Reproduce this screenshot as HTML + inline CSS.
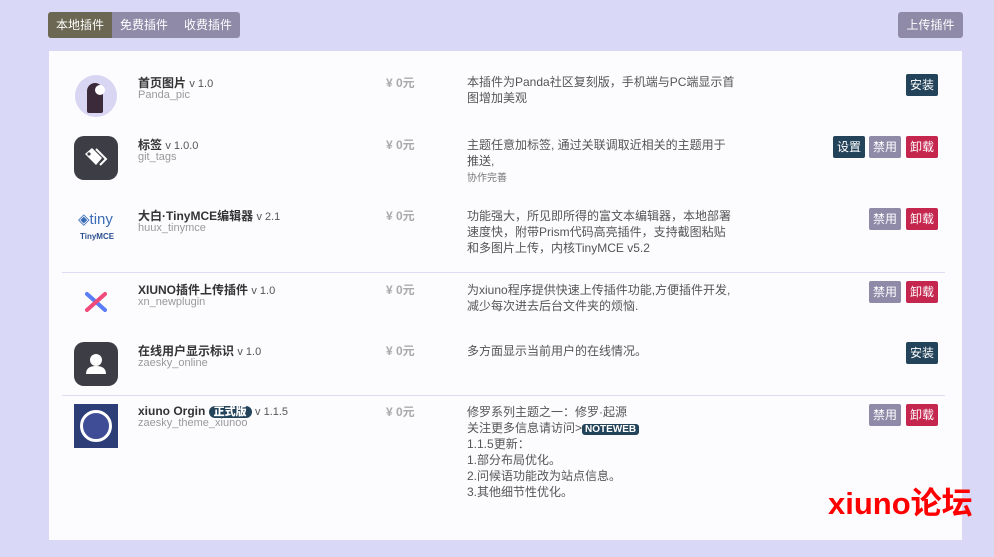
<!DOCTYPE html><html><head><meta charset="utf-8"><style>
body{margin:0;width:994px;height:557px;background:#d9d8f6;font-family:"Liberation Sans","Noto Sans CJK SC",sans-serif;font-size:12px;position:relative;overflow:hidden;color:#444}
.a{position:absolute}
.tabs{left:48px;top:12px;height:26px;display:flex;border-radius:3px;overflow:hidden}
.tabs div{padding:0 8px;line-height:26px;color:#fff;background:#8e8aa8;font-size:12px}
.tabs div.on{background:#6b6752}
.up{left:898px;top:12px;width:65px;height:26px;line-height:26px;text-align:center;color:#fff;background:#8e8aa8;border-radius:3px}
.card{left:49px;top:51px;width:913px;height:489px;background:#fcfcff}
.nm{font-weight:bold;color:#333;font-size:12px;line-height:14px}
.nm span{font-weight:normal;color:#555;font-size:11px}
.cd{color:#999;font-size:11px;line-height:13px}
.pr{color:#aaa;font-size:12px;font-weight:bold;line-height:14px}
.ds{color:#555;font-size:12px;line-height:16px;width:268px}
.b{position:absolute;height:22px;line-height:22px;width:32px;text-align:center;color:#fff;border-radius:2px;font-size:12px}
.in{background:#23435a}.dis{background:#8e8aa8}.un{background:#c4264e}
.hr{height:1px;background:#dcdcf4}
</style></head><body>
<div class="a tabs"><div class="on">本地插件</div><div>免费插件</div><div>收费插件</div></div>
<div class="a up">上传插件</div>
<div class="a card"></div>
<div class="a hr" style="left:62px;top:272px;width:883px"></div>
<div class="a hr" style="left:62px;top:395px;width:883px"></div>

<div class="a" style="left:75px;top:75px;width:42px;height:42px;border-radius:50%;background:#d8d6f2;overflow:hidden"><div style="position:absolute;left:12px;top:8px;width:16px;height:30px;background:#3a2a3a;border-radius:8px 8px 2px 2px"></div><div style="position:absolute;left:20px;top:10px;width:10px;height:10px;background:#fff;border-radius:50%"></div></div>
<div class="a nm" style="left:138px;top:76px">首页图片 <span>v 1.0</span></div>
<div class="a cd" style="left:138px;top:89px">Panda_pic</div>
<div class="a pr" style="left:386px;top:76px">¥ 0元</div>
<div class="a ds" style="left:467px;top:74px">本插件为Panda社区复刻版，手机端与PC端显示首图增加美观</div>
<div class="b in" style="left:906px;top:74px">安装</div>

<div class="a" style="left:74px;top:136px;width:44px;height:44px;border-radius:10px;background:#3d3d45"><svg width="44" height="44" viewBox="0 0 44 44"><path d="M11 18l7-6 10 10-6 7z" fill="#fff"/><circle cx="15" cy="18" r="1.6" fill="#3d3d45"/><path d="M22 13l10 10-6 6" stroke="#fff" stroke-width="2" fill="none"/></svg></div>
<div class="a nm" style="left:138px;top:138px">标签 <span>v 1.0.0</span></div>
<div class="a cd" style="left:138px;top:151px">git_tags</div>
<div class="a pr" style="left:386px;top:138px">¥ 0元</div>
<div class="a ds" style="left:467px;top:137px">主题任意加标签, 通过关联调取近相关的主题用于推送,<br><span style="font-size:10px;color:#777">协作完善</span></div>
<div class="b in" style="left:833px;top:136px">设置</div><div class="b dis" style="left:869px;top:136px">禁用</div><div class="b un" style="left:906px;top:136px">卸载</div>

<div class="a" style="left:78px;top:210px;color:#3b6db5;font-size:15px">◈tiny</div>
<div class="a" style="left:80px;top:232px;color:#2a4f8f;font-size:8px;font-weight:bold">TinyMCE</div>
<div class="a nm" style="left:138px;top:209px">大白·TinyMCE编辑器 <span>v 2.1</span></div>
<div class="a cd" style="left:138px;top:222px">huux_tinymce</div>
<div class="a pr" style="left:386px;top:209px">¥ 0元</div>
<div class="a ds" style="left:467px;top:208px">功能强大，所见即所得的富文本编辑器，本地部署速度快，附带Prism代码高亮插件，支持截图粘贴和多图片上传，内核TinyMCE v5.2</div>
<div class="b dis" style="left:869px;top:208px">禁用</div><div class="b un" style="left:906px;top:208px">卸载</div>

<svg class="a" style="left:84px;top:291px" width="24" height="22"><path d="M3 3l18 16" stroke="#5a7cf5" stroke-width="4" stroke-linecap="round"/><path d="M21 3L3 19" stroke="#ef4a7a" stroke-width="4" stroke-linecap="round"/></svg>
<div class="a nm" style="left:138px;top:283px">XIUNO插件上传插件 <span>v 1.0</span></div>
<div class="a cd" style="left:138px;top:296px">xn_newplugin</div>
<div class="a pr" style="left:386px;top:283px">¥ 0元</div>
<div class="a ds" style="left:467px;top:282px">为xiuno程序提供快速上传插件功能,方便插件开发,减少每次进去后台文件夹的烦恼.</div>
<div class="b dis" style="left:869px;top:281px">禁用</div><div class="b un" style="left:906px;top:281px">卸载</div>

<div class="a" style="left:74px;top:342px;width:44px;height:44px;border-radius:10px;background:#3d3d45"><svg width="44" height="44"><circle cx="22" cy="18" r="6" fill="#fff"/><path d="M12 32q0-8 10-8t10 8z" fill="#fff"/></svg></div>
<div class="a nm" style="left:138px;top:344px">在线用户显示标识 <span>v 1.0</span></div>
<div class="a cd" style="left:138px;top:357px">zaesky_online</div>
<div class="a pr" style="left:386px;top:344px">¥ 0元</div>
<div class="a ds" style="left:467px;top:343px">多方面显示当前用户的在线情况。</div>
<div class="b in" style="left:906px;top:342px">安装</div>

<div class="a" style="left:74px;top:404px;width:44px;height:44px;background:#2c3d78"><div style="position:absolute;left:6px;top:6px;width:26px;height:26px;border:3px solid #fff;border-radius:50%;background:#3e4d95"></div></div>
<div class="a nm" style="left:138px;top:404px">xiuno Orgin <b style="background:#23435a;color:#fff;padding:0 5px;border-radius:8px;font-size:11px">正式版</b> <span>v 1.1.5</span></div>
<div class="a cd" style="left:138px;top:417px">zaesky_theme_xiunoo</div>
<div class="a pr" style="left:386px;top:405px">¥ 0元</div>
<div class="a ds" style="left:467px;top:404px">修罗系列主题之一：修罗·起源<br>关注更多信息请访问&gt;<b style="background:#23435a;color:#fff;padding:0 3px;border-radius:3px;font-size:10px;line-height:12px">NOTEWEB</b><br>1.1.5更新：<br>1.部分布局优化。<br>2.问候语功能改为站点信息。<br>3.其他细节性优化。</div>
<div class="b dis" style="left:869px;top:404px">禁用</div><div class="b un" style="left:906px;top:404px">卸载</div>

<div class="a" style="left:828px;top:486px;color:#f00;font-size:31px;font-weight:bold;line-height:36px">xiuno论坛</div>
</body></html>
